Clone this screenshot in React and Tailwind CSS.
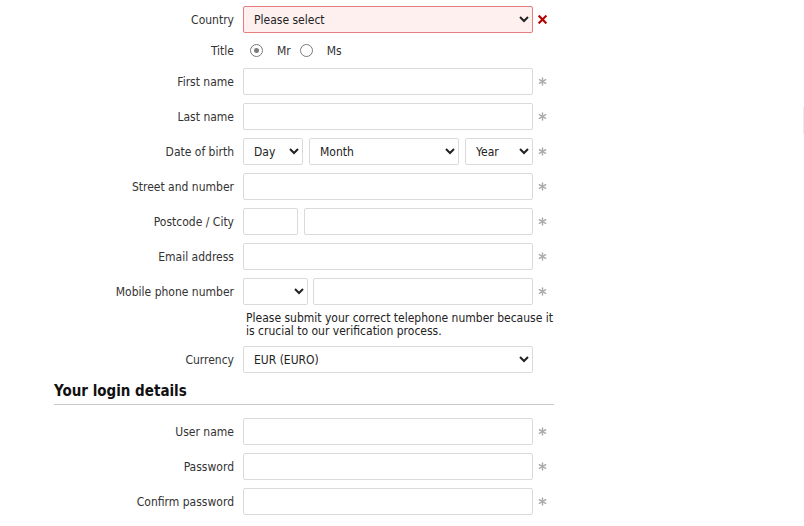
import React from 'react';

const FONT = { fontFamily: '"DejaVu Sans Condensed", Tahoma, "Liberation Sans", sans-serif' };

function Req() {
  return (
    <svg width="9" height="9" viewBox="0 0 10 10" className="shrink-0">
      <g stroke="#ababab" strokeWidth="1.6" strokeLinecap="round">
        <line x1="5" y1="1" x2="5" y2="9" />
        <line x1="1.5" y1="3" x2="8.5" y2="7" />
        <line x1="1.5" y1="7" x2="8.5" y2="3" />
      </g>
    </svg>
  );
}

function ErrX() {
  return (
    <svg width="9" height="9" viewBox="0 0 10 10" className="shrink-0">
      <g stroke="#b80000" strokeWidth="2.4" strokeLinecap="square">
        <line x1="1.5" y1="1.5" x2="8.5" y2="8.5" />
        <line x1="8.5" y1="1.5" x2="1.5" y2="8.5" />
      </g>
    </svg>
  );
}

const box = 'h-[27px] border border-[#dadada] rounded-[2px] bg-white text-[12px] text-[#222] outline-none';
const sel = `${box} pl-[6px] pr-[4px]`;

function Row({ label, children, mark = 'req', className = 'h-[27px]' }) {
  return (
    <div className={`flex items-center ${className}`}>
      <div className="w-[189px] pr-[9px] text-right text-[12px] text-[#333] shrink-0">{label}</div>
      <div className="flex w-[290px] gap-[6px] shrink-0">{children}</div>
      <div className="pl-[5px] flex items-center">
        {mark === 'req' && <Req />}
        {mark === 'err' && <ErrX />}
      </div>
    </div>
  );
}

function Radio({ checked }) {
  return (
    <span className="w-[13px] h-[13px] rounded-full border-[1.5px] border-[#7a7a7a] flex items-center justify-center bg-white">
      {checked && <span className="w-[5px] h-[5px] rounded-full bg-[#7a7a7a]" />}
    </span>
  );
}

export default function App() {
  return (
    <div className="relative w-[804px] h-[526px] bg-white overflow-hidden" style={FONT}>
      <div className="absolute right-0 top-[107px] w-px h-[27px] bg-[#ececec]" />
      <div className="ml-[54px] w-[500px] pt-[6px] flex flex-col gap-[8px]">
        <Row label="Country" mark="err">
          <select className={`${sel} w-full !bg-[#fff0f0] !border-[#e57e7e]`} defaultValue="">
            <option value="">Please select</option>
          </select>
        </Row>
        <Row label="Title" mark="none" className="h-[19px]">
          <div className="flex items-center text-[12px] text-[#333] pl-[7px]">
            <Radio checked />
            <span className="ml-[14px]">Mr</span>
            <span className="ml-[9px]"><Radio /></span>
            <span className="ml-[14px]">Ms</span>
          </div>
        </Row>
        <Row label="First name">
          <input className={`${box} w-full px-2`} />
        </Row>
        <Row label="Last name">
          <input className={`${box} w-full px-2`} />
        </Row>
        <Row label="Date of birth">
          <select className={`${sel} w-[60px]`}><option>Day</option></select>
          <select className={`${sel} w-[150px]`}><option>Month</option></select>
          <select className={`${sel} w-[68px]`}><option>Year</option></select>
        </Row>
        <Row label="Street and number">
          <input className={`${box} w-full px-2`} />
        </Row>
        <Row label="Postcode / City">
          <input className={`${box} w-[55px] px-2`} />
          <input className={`${box} flex-1 min-w-0 px-2`} />
        </Row>
        <Row label="Email address">
          <input className={`${box} w-full px-2`} />
        </Row>
        <div className="flex flex-col">
          <Row label="Mobile phone number">
            <select className={`${sel} w-[65px]`}><option></option></select>
            <input className={`${box} flex-1 min-w-0 px-2 -ml-px`} />
          </Row>
          <p className="ml-[192px] mt-[7px] text-[12px] leading-[13px] text-[#222]">
            Please submit your correct telephone number because it<br />is crucial to our verification process.
          </p>
        </div>
        <Row label="Currency" mark="none">
          <select className={`${sel} w-full`}><option>EUR (EURO)</option></select>
        </Row>
        <div className="mt-[1px] mb-[5px] border-b border-[#c8c8c8] pb-[3px]">
          <h2 className="text-[15px] leading-[19px] font-bold text-[#111]">Your login details</h2>
        </div>
        <Row label="User name">
          <input className={`${box} w-full px-2`} />
        </Row>
        <Row label="Password">
          <input type="password" className={`${box} w-full px-2`} />
        </Row>
        <Row label="Confirm password">
          <input type="password" className={`${box} w-full px-2`} />
        </Row>
      </div>
    </div>
  );
}
